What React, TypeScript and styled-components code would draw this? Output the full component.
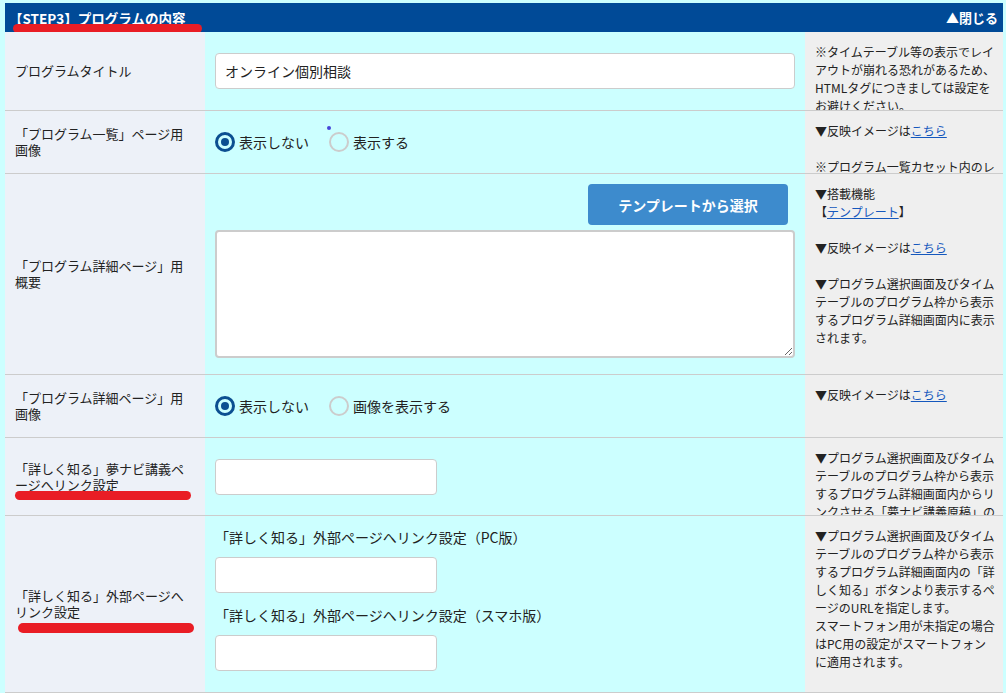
import React from 'react';
import styled, { createGlobalStyle } from 'styled-components';

const GlobalStyle = createGlobalStyle`
  html, body {
    margin: 0;
    padding: 0;
    background: #ccffff;
  }
  body {
    font-family: "Noto Sans CJK JP", "Noto Sans", sans-serif;
    color: #222;
  }
  * { box-sizing: border-box; }
`

const Page = styled.div`
  padding: 3px 3px 0 5px;
  width: 1006px;
  height: 693px;
  overflow: hidden;
`

const Header = styled.div`
  height: 29px;
  background: #004a97;
  color: #fff;
  font-weight: bold;
  font-size: 13px;
  display: flex;
  justify-content: space-between;
  align-items: center;
  padding: 0 5px 0 4px;
`

const Title = styled.div`
  position: relative;
  font-size: 13.5px;
  line-height: 20px;
`

const Toggle = styled.div`
  cursor: pointer;
`

// red pen strokes drawn over the screenshot
const RedMark = styled.span<{ $left: number; $top: number; $w: number; $h?: number }>`
  position: absolute;
  left: ${p => p.$left}px;
  top: ${p => p.$top}px;
  width: ${p => p.$w}px;
  height: ${p => p.$h || 9}px;
  background: #e91d25;
  border-radius: 6px;
`

const Row = styled.div<{ $h: number }>`
  display: grid;
  grid-template-columns: 200px 600px 1fr;
  height: ${p => p.$h}px;
  border-bottom: 1px solid #cccccc;
`

const Label = styled.div`
  position: relative;
  background: #edf1f8;
  display: flex;
  align-items: center;
  padding: 0 10px;
  font-size: 13px;
  line-height: 16px;
`

const Cell = styled.div<{ $top?: boolean }>`
  display: flex;
  flex-direction: column;
  justify-content: ${p => (p.$top ? 'flex-start' : 'center')};
  align-items: flex-start;
  padding: ${p => (p.$top ? '10px' : '0')} 10px 0;
`

const Note = styled.div`
  background: #efefef;
  padding: 11px 6px 0 10px;
  font-size: 12px;
  line-height: 18px;
  overflow: hidden;
  color: #222;
`

const NoteLink = styled.a`
  color: #1558bd;
  text-decoration: underline;
`

const TextInput = styled.input<{ $w: number }>`
  width: ${p => p.$w}px;
  height: 36px;
  border: 1px solid #cccccc;
  border-radius: 4px;
  background: #fff;
  padding: 0 9px;
  font-family: inherit;
  font-size: 14px;
  color: #222;
  outline: none;
`

const TextArea = styled.textarea`
  width: 580px;
  height: 128px;
  border: 2px solid #cccccc;
  border-radius: 4px;
  background: #fff;
  font-family: inherit;
  font-size: 14px;
  resize: vertical;
  outline: none;
  margin-top: 5px;
`

const SelectButton = styled.button`
  align-self: flex-end;
  margin-right: 7px;
  width: 200px;
  height: 41px;
  border: none;
  border-radius: 4px;
  background: #3d8bcd;
  color: #fff;
  font-family: inherit;
  font-size: 14px;
  font-weight: bold;
`

const RadioGroup = styled.div`
  display: flex;
  align-items: center;
  gap: 20px;
  font-size: 14px;
`

const Option = styled.label`
  position: relative;
  display: flex;
  align-items: center;
  gap: 4px;
`

const Circle = styled.span<{ $on?: boolean }>`
  width: 20px;
  height: 20px;
  border-radius: 50%;
  border: ${p => (p.$on ? '3px solid #0b4f91' : '2px solid #cccccc')};
  display: flex;
  align-items: center;
  justify-content: center;
  &::after {
    content: '';
    display: ${p => (p.$on ? 'block' : 'none')};
    width: 8px;
    height: 8px;
    border-radius: 50%;
    background: #0b4f91;
  }
`

const Dot = styled.span`
  position: absolute;
  left: -2px;
  top: -6px;
  width: 4px;
  height: 4px;
  border-radius: 50%;
  background: #4646d8;
`

const FieldTitle = styled.div`
  font-size: 14px;
  line-height: 20px;
  margin: 1px 0 10px;
`

const Spacer = styled.div`
  height: 11px;
`

function Radios({ items, dot }: { items: string[]; dot?: boolean }) {
  return (
    <RadioGroup>
      {items.map((t, i) => (
        <Option key={t}>
          {dot && i === 1 && <Dot />}
          <Circle $on={i === 0} />
          {t}
        </Option>
      ))}
    </RadioGroup>
  );
}

export default function App() {
  return (
    <Page>
      <GlobalStyle />
      <Header>
        <Title>
          【STEP3】プログラムの内容
          <RedMark $left={4} $top={16} $w={189} />
        </Title>
        <Toggle>▲閉じる</Toggle>
      </Header>

      <Row $h={79}>
        <Label>プログラムタイトル</Label>
        <Cell>
          <TextInput $w={580} defaultValue="オンライン個別相談" />
        </Cell>
        <Note>
          ※タイムテーブル等の表示でレイアウトが崩れる恐れがあるため、HTMLタグにつきましては設定をお避けください。
        </Note>
      </Row>

      <Row $h={63}>
        <Label>「プログラム一覧」ページ用画像</Label>
        <Cell>
          <Radios items={['表示しない', '表示する']} dot />
        </Cell>
        <Note>
          ▼反映イメージは<NoteLink>こちら</NoteLink>
          <br />
          <br />
          ※プログラム一覧カセット内のレイアウトが崩れる恐れがあります。
        </Note>
      </Row>

      <Row $h={201}>
        <Label>「プログラム詳細ページ」用概要</Label>
        <Cell $top>
          <SelectButton>テンプレートから選択</SelectButton>
          <TextArea />
        </Cell>
        <Note>
          ▼搭載機能
          <br />
          【<NoteLink>テンプレート</NoteLink>】
          <br />
          <br />
          ▼反映イメージは<NoteLink>こちら</NoteLink>
          <br />
          <br />
          ▼プログラム選択画面及びタイムテーブルのプログラム枠から表示するプログラム詳細画面内に表示されます。
        </Note>
      </Row>

      <Row $h={63}>
        <Label>「プログラム詳細ページ」用画像</Label>
        <Cell>
          <Radios items={['表示しない', '画像を表示する']} />
        </Cell>
        <Note>
          ▼反映イメージは<NoteLink>こちら</NoteLink>
        </Note>
      </Row>

      <Row $h={78}>
        <Label>
          「詳しく知る」夢ナビ講義ページへリンク設定
          <RedMark $left={10} $top={53} $w={176} />
        </Label>
        <Cell>
          <TextInput $w={222} />
        </Cell>
        <Note>
          ▼プログラム選択画面及びタイムテーブルのプログラム枠から表示するプログラム詳細画面内からリンクさせる「夢ナビ講義原稿」のURLを指定します。
        </Note>
      </Row>

      <Row $h={177}>
        <Label>
          「詳しく知る」外部ページへリンク設定
          <RedMark $left={13} $top={107} $w={176} $h={10} />
        </Label>
        <Cell $top>
          <FieldTitle>「詳しく知る」外部ページへリンク設定（PC版）</FieldTitle>
          <TextInput $w={222} />
          <Spacer />
          <FieldTitle>「詳しく知る」外部ページへリンク設定（スマホ版）</FieldTitle>
          <TextInput $w={222} />
        </Cell>
        <Note>
          ▼プログラム選択画面及びタイムテーブルのプログラム枠から表示するプログラム詳細画面内の「詳しく知る」ボタンより表示するページのURLを指定します。
          <br />
          スマートフォン用が未指定の場合はPC用の設定がスマートフォンに適用されます。
        </Note>
      </Row>
    </Page>
  );
}
